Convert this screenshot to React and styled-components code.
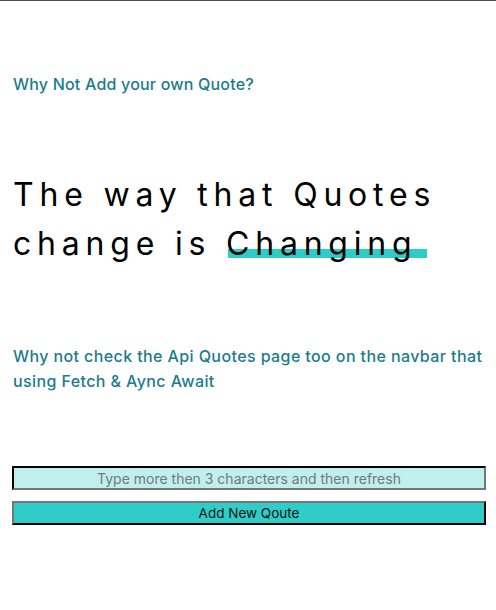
import React, { useState } from "react";
import styled, { createGlobalStyle } from "styled-components";

const GlobalStyle = createGlobalStyle`
  body {
    margin: 0;
    background: #fff;
    font-family: Inter, "DejaVu Sans", sans-serif;
  }
`;

const TopLine = styled.div`
  height: 1px;
  background: #4f4f4f;
`;

const Main = styled.main`
  padding: 0 10px 0 12px;
`;

const SubTitle = styled.h3`
  margin: 71px 0 0 1px;
  font-size: 16px;
  line-height: 24px;
  font-weight: 500;
  letter-spacing: 0.2px;
  color: #1b7c8c;
`;

const Title = styled.h1`
  margin: 74px 0 0 1px;
  font-size: 32px;
  line-height: 49px;
  font-weight: 400;
  letter-spacing: 5.8px;
  color: #000;
`;

const Mark = styled.span`
  position: relative;
  z-index: 0;
  &::after {
    content: "";
    position: absolute;
    z-index: -1;
    left: 2px;
    right: -10px;
    bottom: 5px;
    height: 9px;
    background: #2ecbc7;
  }
`;

const Info = styled.p`
  margin: 76px 0 0 1px;
  font-size: 16px;
  line-height: 25px;
  font-weight: 500;
  letter-spacing: 0.4px;
  color: #1b7c8c;
`;

const Form = styled.form`
  display: flex;
  flex-direction: column;
  gap: 11px;
  margin-top: 72px;
`;

const Input = styled.input`
  box-sizing: border-box;
  width: 100%;
  height: 24px;
  border: 2px inset #767676;
  border-color: #222 #767676 #767676 #222;
  background: #bff0ee;
  text-align: center;
  font-family: inherit;
  font-size: 14px;
  color: #333;
  &::placeholder {
    color: #777;
  }
`;

const Button = styled.button`
  box-sizing: border-box;
  width: 100%;
  height: 24px;
  border: 2px outset #767676;
  border-color: #767676 #222 #222 #767676;
  background: #2ecdc8;
  font-family: inherit;
  font-size: 13.5px;
  color: #111;
  cursor: pointer;
`;

export default function App() {
  const [quote, setQuote] = useState("");

  function addQuote(e) {
    e.preventDefault();
    if (quote.length > 3) setQuote("");
  }

  return (
    <>
      <GlobalStyle />
      <TopLine />
      <Main>
        <SubTitle>Why Not Add your own Quote?</SubTitle>
        <Title>
          The way that Quotes change is <Mark>Changing</Mark>
        </Title>
        <Info>Why not check the Api Quotes page too on the navbar that using Fetch &amp; Aync Await</Info>
        <Form onSubmit={addQuote}>
          <Input
            value={quote}
            onChange={e => setQuote(e.target.value)}
            placeholder="Type more then 3 characters and then refresh"
          />
          <Button>Add New Qoute</Button>
        </Form>
      </Main>
    </>
  );
}
